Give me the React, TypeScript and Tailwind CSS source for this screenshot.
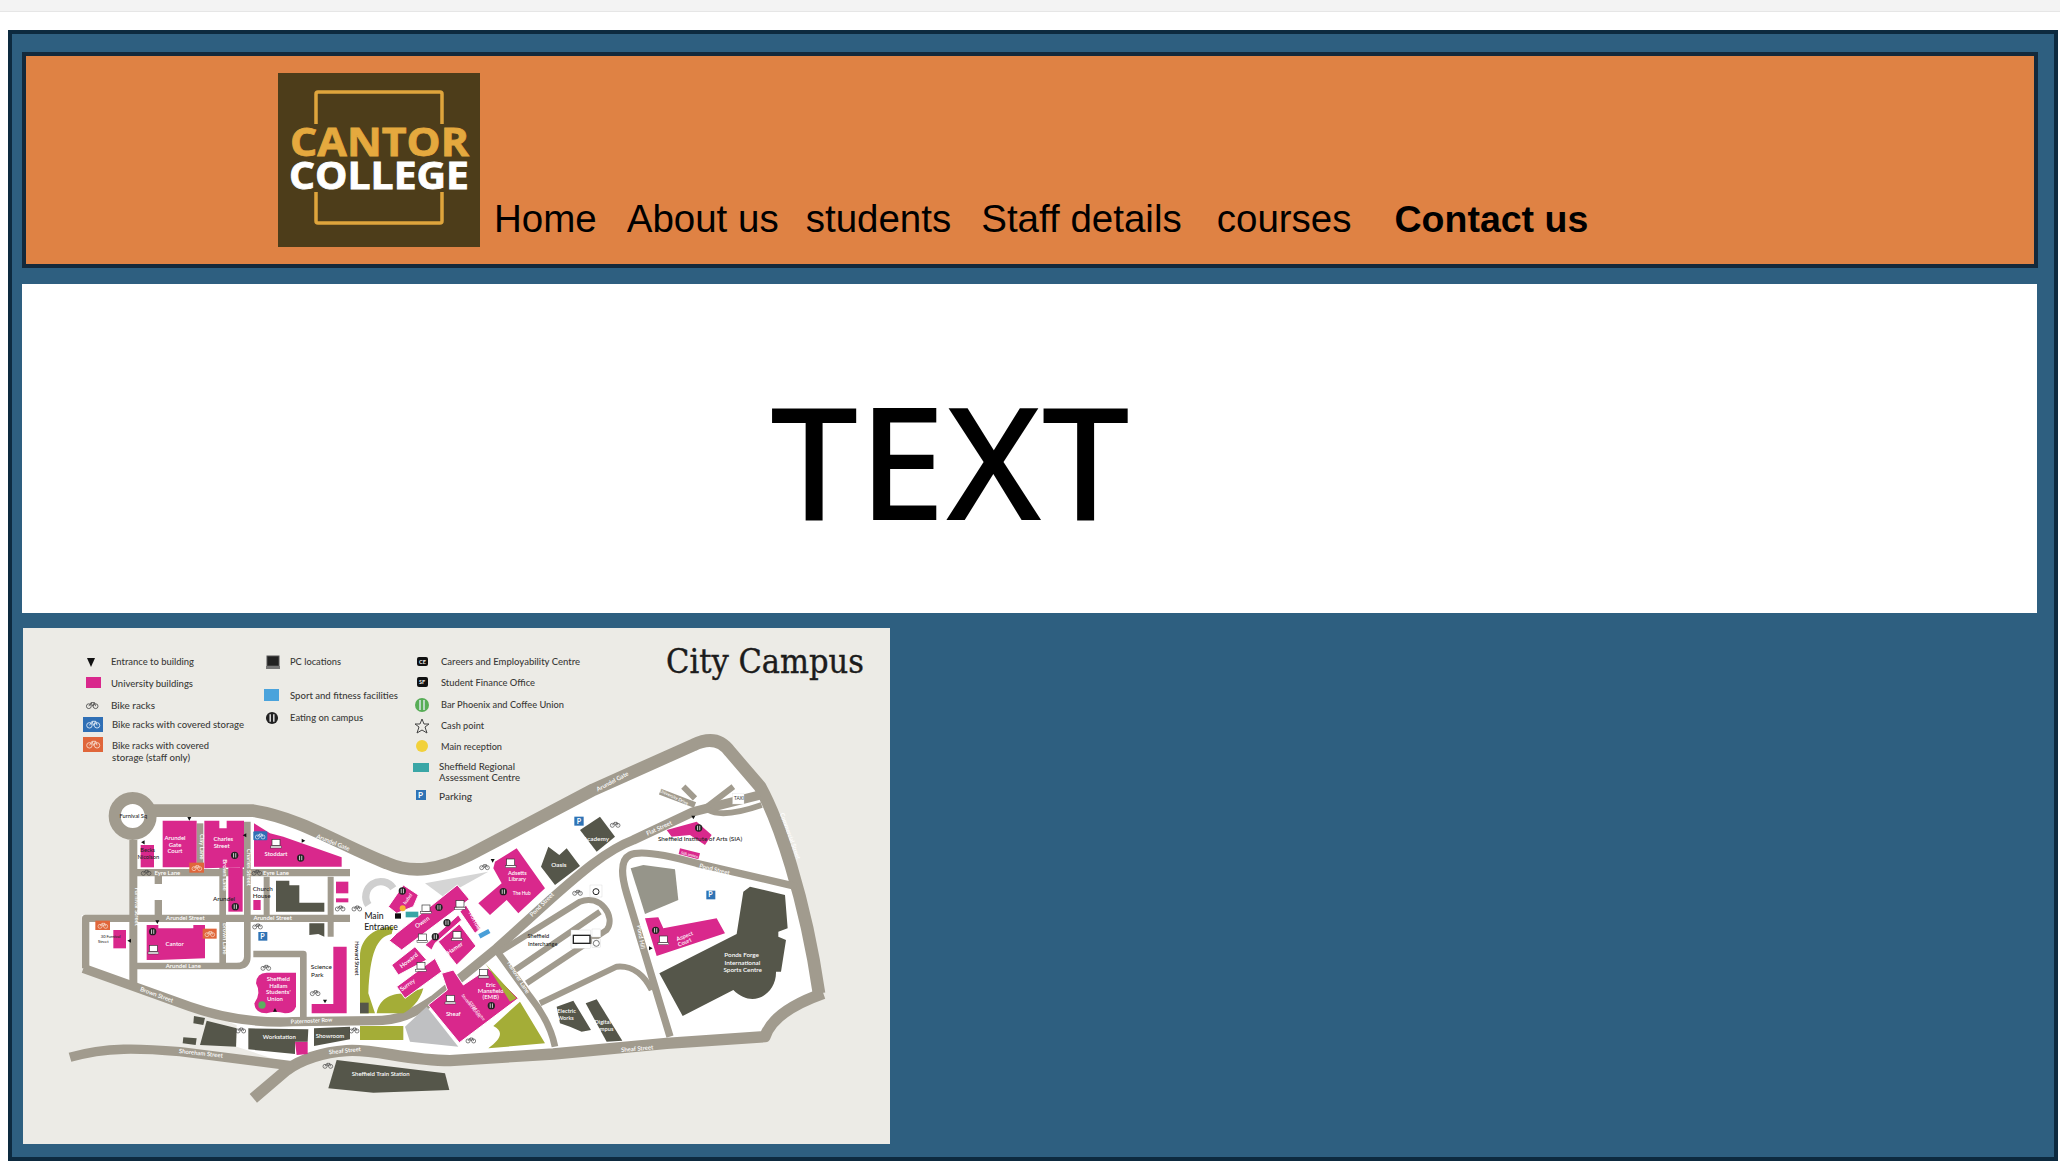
const nav = [
  { label: "Home", className: "ml-[14px]" },
  { label: "About us", className: "ml-[30px]" },
  { label: "students", className: "ml-[27px]" },
  { label: "Staff details", className: "ml-[30px]" },
  { label: "courses", className: "ml-[35px]" },
  { label: "Contact us", className: "ml-[43px] text-[37.5px] font-bold" },
];

const PINK = "#d9288c";
const ROAD = "#a19b8e";
const DARK = "#55564a";
const OLIVE = "#a4ad37";
const GREY = "#bfc0c2";

// building outlines, in coordinates of the left half of the map
const pinkLeft = [
  "368,122 470,122 470,262 368,262",
  "493,122 538,122 538,145 560,145 560,122 612,122 612,262 600,265 600,262 493,265",
  "565,262 608,262 608,395 565,395",
  "302,195 342,195 342,262 302,262",
  "642,130 690,160 730,170 905,232 905,260 642,260",
  "320,435 355,435 355,445 460,445 460,435 495,435 495,535 355,540 320,540",
  "220,450 258,450 258,505 220,505",
  "640,360 662,360 662,390 640,390",
  "888,305 925,305 925,340 888,340",
  "888,355 925,355 925,367 888,367",
  "880,500 920,500 920,700 815,700 815,672 880,672",
  "765,785 803,785 803,822 770,825",
];
const darkLeft = [
  "462,708 495,714 490,735 460,730",
  "430,772 470,775 467,795 428,790",
  "500,722 590,745 588,800 480,795",
  "625,745 805,748 803,785 765,785 765,822 625,808",
  "822,745 930,740 930,778 822,798",
  "708,302 748,302 748,316 778,316 778,368 853,368 853,395 708,395",
  "808,430 853,430 853,470 835,462 808,465",
  "960,668 986,668 986,700 960,700",
];
// central cluster
const pinkMiddle = [
  "85,170 130,105 175,135 160,170 110,190",
  "88,272 110,250 292,105 328,148 125,300",
  "300,185 318,165 362,235 345,250",
  "235,275 298,222 348,288 290,345",
  "195,285 295,195 305,210 225,280 215,300",
  "95,345 165,290 200,330 115,375",
  "110,410 225,325 245,365 135,445",
  "245,370 280,360 310,405 385,355 475,445 298,578 205,465 262,420",
];
// right half
const pinkRight = [
  "285,245 350,205 435,325 355,400 320,360 270,405 235,370 305,310 280,265",
  "735,415 775,412 790,445 950,415 975,460 770,528",
  "800,150 890,125 935,165 915,195 870,165 815,170",
  "840,205 900,220 895,238 836,222",
];
const darkRight = [
  "600,110 645,170 590,215 540,150",
  "445,200 478,225 500,205 540,258 465,315 423,260",
  "470,680 520,662 573,750 545,755 510,740 480,730",
  "557,670 590,658 667,782 620,785",
];

function Bike({ x, y, color = "#444" }: { x: number; y: number; color?: string }) {
  return (
    <g transform={`translate(${x} ${y})`} fill="none" stroke={color} strokeWidth="2">
      <circle cx="-8" cy="3" r="6" />
      <circle cx="9" cy="3" r="6" />
      <path d="M-8 3 L-2 -6 L6 -6 L9 3 M-2 -6 L1 3 L6 -6" />
    </g>
  );
}

function Eat({ x, y, r = 11 }: { x: number; y: number; r?: number }) {
  return (
    <g transform={`translate(${x} ${y})`}>
      <circle r={r} fill="#222" />
      <path d={`M${-r * 0.3} ${-r * 0.6} V${r * 0.6} M${r * 0.3} ${-r * 0.6} V${r * 0.6}`} stroke="#eee" strokeWidth="2.5" />
    </g>
  );
}

function Pc({ x, y }: { x: number; y: number }) {
  return (
    <g transform={`translate(${x} ${y})`}>
      <rect x="-12" y="-13" width="24" height="19" fill="#fff" stroke="#333" strokeWidth="2" />
      <rect x="-16" y="7" width="32" height="6" fill="#fff" stroke="#333" strokeWidth="1.5" />
    </g>
  );
}

function Arrow({ x, y, rotate = 0 }: { x: number; y: number; rotate?: number }) {
  return <path transform={`translate(${x} ${y}) rotate(${rotate})`} d="M-6 -5 H6 L0 6 Z" fill="#111" />;
}

function Label({
  x,
  y,
  text,
  size = 18,
  rotate = 0,
  color = "#fff",
  weight = 600,
}: {
  x: number;
  y: number;
  text: string;
  size?: number;
  rotate?: number;
  color?: string;
  weight?: number;
}) {
  return (
    <text
      transform={`translate(${x} ${y}) rotate(${rotate})`}
      textAnchor="middle"
      fontSize={size}
      fontWeight={weight}
      fill={color}
    >
      {text}
    </text>
  );
}

function Legend({ x, y, width, text }: { x: number; y: number; width: number; text: string }) {
  return (
    <text x={x} y={y} fontSize="9.5" fontWeight="500" fill="#3a3a38" textLength={width} lengthAdjust="spacingAndGlyphs">
      {text}
    </text>
  );
}

function CampusMap() {
  return (
    <svg viewBox="23 628 867 516" className="block h-[516px] w-[867px]" style={{ fontFamily: '"Lato", "Open Sans", sans-serif' }}>
      <rect x="23" y="628" width="867" height="516" fill="#ecebe6" />

      {/* legend */}
      <path d="M87 658 H95 L91 667 Z" fill="#111" />
      <rect x="86" y="677" width="15" height="11" fill={PINK} />
      <g transform="translate(92 705) scale(.4)">
        <Bike x={0} y={0} />
      </g>
      <rect x="83" y="717" width="20" height="15" fill="#2f6fb5" />
      <g transform="translate(93 724) scale(.45)">
        <Bike x={0} y={0} color="#dfe9f5" />
      </g>
      <rect x="83" y="737" width="20" height="15" fill="#e0663a" />
      <g transform="translate(93 744) scale(.45)">
        <Bike x={0} y={0} color="#f6d8c8" />
      </g>
      <Legend x={111} y={665} width={83} text="Entrance to building" />
      <Legend x={111} y={687} width={82} text="University buildings" />
      <Legend x={111} y={709} width={44} text="Bike racks" />
      <Legend x={112} y={728} width={132} text="Bike racks with covered storage" />
      <Legend x={112} y={749} width={97} text="Bike racks with covered" />
      <Legend x={112} y={761} width={78} text="storage (staff only)" />

      <rect x="267" y="656" width="12" height="10" fill="#222" stroke="#555" />
      <rect x="266" y="666" width="14" height="3" fill="#777" />
      <rect x="264" y="689" width="15" height="12" fill="#4aa3dc" />
      <g transform="translate(272 718) scale(.55)">
        <Eat x={0} y={0} />
      </g>
      <Legend x={290} y={665} width={51} text="PC locations" />
      <Legend x={290} y={699} width={108} text="Sport and fitness facilities" />
      <Legend x={290} y={721} width={73} text="Eating on campus" />

      <rect x="417" y="657" width="11" height="9" rx="2" fill="#111" />
      <text x="419" y="664" fontSize="5.5" fontWeight="700" fill="#eee">CE</text>
      <rect x="417" y="677" width="11" height="10" rx="2" fill="#111" />
      <text x="419" y="684" fontSize="5.5" fontWeight="700" fill="#eee">SF</text>
      <circle cx="422" cy="705" r="7" fill="#58ad57" />
      <path d="M420 700 V710 M424 700 V710" stroke="#eef" strokeWidth="1.3" />
      <path d="M422 719 L424 724 L429 724 L425 727 L427 733 L422 730 L417 733 L419 727 L415 724 L420 724 Z" fill="none" stroke="#444" />
      <circle cx="422" cy="746" r="6" fill="#f2d13b" />
      <rect x="413" y="763" width="16" height="9" fill="#3aa6a6" />
      <rect x="416" y="790" width="10" height="10" fill="#2f73b5" />
      <text x="418" y="798" fontSize="8" fontWeight="700" fill="#fff">P</text>
      <Legend x={441} y={665} width={139} text="Careers and Employability Centre" />
      <Legend x={441} y={686} width={94} text="Student Finance Office" />
      <Legend x={441} y={708} width={123} text="Bar Phoenix and Coffee Union" />
      <Legend x={441} y={729} width={43} text="Cash point" />
      <Legend x={441} y={750} width={61} text="Main reception" />
      <Legend x={439} y={770} width={76} text="Sheffield Regional" />
      <Legend x={439} y={781} width={81} text="Assessment Centre" />
      <Legend x={439} y={800} width={33} text="Parking" />

      <text
        x="666"
        y="673"
        fontSize="34"
        fill="#1c1c1c"
        stroke="#1c1c1c"
        strokeWidth=".4"
        textLength="198"
        lengthAdjust="spacingAndGlyphs"
        style={{ fontFamily: '"DejaVu Serif", serif' }}
      >
        City Campus
      </text>

      {/* the map itself, drawn at 3 units to a pixel */}
      <g transform="translate(40 780) scale(.33333)">
        <path
          d="M280,108 L640,90 C780,110 900,190 1040,245 C1120,280 1200,265 1290,220 L1660,25 L1960,-105 Q2030,-140 2070,-85 L2160,20 C2215,120 2295,350 2340,640 C2265,670 2195,710 2175,770 L1880,790 L1540,820 L1230,838 L950,800 L830,810 L740,850 L590,800 L590,735 L130,565 L125,405 L280,405 Z"
          fill="#fff"
        />
        <g fill="none" stroke={ROAD} strokeLinejoin="round" strokeLinecap="butt">
          <path strokeWidth="38" d="M330,92 L640,92 C780,114 900,194 1040,249 C1120,284 1200,269 1290,224 L1660,29 L1960,-105 Q2030,-140 2070,-85 L2160,20 C2215,120 2295,350 2337,640" />
          <path strokeWidth="34" d="M2350,640 C2265,670 2195,710 2175,770 L1880,790 L1540,822 L1230,842 C1100,842 1000,805 920,812 C840,818 780,842 740,870 L640,955" />
          <path strokeWidth="28" d="M90,832 C200,800 300,805 420,815 L760,858" />
          <path strokeWidth="28" d="M130,565 L450,680 C550,715 650,730 760,725 L1000,722 C1080,722 1120,700 1180,660 L1370,505 L1530,360 C1620,280 1700,210 1780,180 L1960,95 L2160,45" />
          <path strokeWidth="22" d="M137,565 L137,415 L930,415" />
          <path strokeWidth="24" d="M280,180 L280,625" />
          <path strokeWidth="22" d="M290,278 L930,278" />
          <path strokeWidth="20" d="M548,240 L548,555" />
          <path strokeWidth="20" d="M622,125 L622,530 Q622,558 590,558 L290,558" />
          <path strokeWidth="20" d="M480,130 L480,270" />
          <path strokeWidth="22" d="M355,285 L355,312 M355,360 L355,405" />
          <path strokeWidth="18" d="M680,290 L680,405 M872,290 L872,470" />
          <path strokeWidth="20" d="M640,522 L790,522 L790,720" />
          {/* right hand side streets */}
          <g transform="translate(1080 0)">
            <path strokeWidth="22" d="M1190,320 L890,250 C800,225 720,210 690,225 C660,240 665,290 680,340 L810,770" />
            <path strokeWidth="20" d="M285,505 L390,650 C430,700 455,750 465,800" />
            <path strokeWidth="18" d="M300,515 L540,365 C600,340 650,410 620,450 L380,610 M345,570 L600,395" />
            <path strokeWidth="18" d="M420,670 L650,560 C700,555 735,590 755,630" />
            <path strokeWidth="18" d="M915,85 L1000,20 M925,90 Q970,115 1085,75 M780,35 L885,75 M850,20 L885,55" />
          </g>
        </g>
        <circle cx="278" cy="108" r="54" fill="#fff" stroke={ROAD} strokeWidth="36" />

        <path d="M960,700 L960,530 C960,470 1010,440 1060,440 L1055,462 C1010,470 990,520 985,640 L1005,700 Z M1010,700 C1020,650 1060,640 1100,640 L1150,625 C1140,665 1110,690 1090,700 Z" fill={OLIVE} />
        <rect x="960" y="738" width="130" height="42" fill={OLIVE} />
        <path d="M1095,740 L1160,680 L1255,800 L1110,785 Z" fill={GREY} />
        <path d="M1155,310 L1345,275 L1210,350 Z" fill="#d5d5d5" />
        <path d="M985,375 A40,40 0 1 1 1060,325" fill="none" stroke="#cfcfcf" strokeWidth="22" />

        {pinkLeft.map((points) => (
          <polygon key={points} points={points} fill={PINK} />
        ))}
        <path d="M648,610 Q650,578 680,578 L768,578 L768,680 Q760,700 735,700 Q705,690 680,700 Q645,700 643,670 Q665,640 648,610 Z" fill={PINK} />
        {darkLeft.map((points) => (
          <polygon key={points} points={points} fill={DARK} />
        ))}
        <path d="M890,840 L1215,880 L1228,930 L1000,938 L865,925 Z" fill={DARK} />

        <g transform="translate(960 210)">
          {pinkMiddle.map((points) => (
            <polygon key={points} points={points} fill={PINK} stroke="#fff" strokeWidth="3" />
          ))}
          <rect x="356" y="244" width="34" height="14" transform="rotate(-28 373 251)" fill="#4a9fd8" />
          <circle cx="128" cy="175" r="9" fill="#f5b335" />
          <rect x="137" y="185" width="38" height="17" fill="#39a5a5" />
          <Pc x={198} y={178} />
          <Pc x={300} y={165} />
          <Pc x={187} y={265} />
          <Pc x={291} y={258} />
          <Pc x={183} y={351} />
          <Pc x={371} y={371} />
          <Pc x={271} y={449} />
          <Eat x={237} y={172} />
          <Eat x={261} y={218} />
          <Eat x={226} y={260} />
          <Eat x={394} y={467} />
          <Eat x={127} y={123} />
          <rect x="105" y="190" width="18" height="16" fill="#111" />
          <Label x={190} y={222} rotate={-35} text="Owen" />
          <Label x={340} y={215} rotate={62} text="Norfolk" />
          <Label x={288} y={300} rotate={-35} text="Hamer" />
          <Label x={225} y={242} rotate={-40} text="Atkin" />
          <Label x={150} y={336} rotate={-38} text="Howard" />
          <Label x={146} y={410} rotate={-35} text="Surrey" />
          <Label x={280} y={497} text="Sheaf" />
          <Label x={392} y={410} text="Eric" />
          <Label x={392} y={428} text="Mansfield" />
          <Label x={392} y={446} text="(EMB)" />
          <Label x={330} y={470} size={12} rotate={52} text="Stoddart Atrium" />
          <Label x={348} y={485} size={12} rotate={52} text="STEM Centre" />
          <Label x={147} y={150} size={14} rotate={-55} text="Isabel" />
        </g>

        <Arrow x={448} y={116} />
        <Arrow x={311} y={188} rotate={-30} />
        <Arrow x={614} y={166} rotate={90} />
        <Arrow x={790} y={182} rotate={-90} />
        <Arrow x={352} y={426} />
        <Arrow x={268} y={482} rotate={90} />
        <Arrow x={855} y={664} />
        <Arrow x={705} y={690} rotate={180} />
        <Bike x={318} y={277} />
        <Bike x={650} y={277} />
        <Bike x={900} y={384} />
        <Bike x={950} y={384} />
        <Bike x={652} y={438} />
        <Bike x={677} y={562} />
        <Bike x={825} y={638} />
        <Bike x={602} y={750} />
        <Bike x={942} y={750} />
        <Bike x={863} y={856} />
        <rect x="640" y="154" width="42" height="27" rx="3" fill="#2f6fb5" />
        <rect x="448" y="248" width="44" height="30" fill="#e0663a" />
        <rect x="166" y="422" width="44" height="28" fill="#e0663a" />
        <rect x="488" y="446" width="42" height="30" fill="#e0663a" />
        <Bike x={660} y={168} color="#e8f0fa" />
        <Bike x={470} y={263} color="#f9e2d5" />
        <Bike x={188} y={436} color="#f9e2d5" />
        <Bike x={509} y={461} color="#f9e2d5" />
        <rect x="655" y="456" width="27" height="26" fill="#2f73b5" />
        <text x="661" y="477" fontSize="21" fontWeight="700" fill="#fff">P</text>
        <Eat x={338} y={455} />
        <Eat x={586} y={380} />
        <Eat x={584} y={226} />
        <Eat x={782} y={234} />
        <Pc x={340} y={509} />
        <Pc x={708} y={191} />
        <circle cx="666" cy="675" r="11" fill="#5bb060" />

        <Label x={280} y={114} size={17} color="#222" weight={500} text="Furnival Sq" />
        <Label x={405} y={180} text="Arundel" />
        <Label x={405} y={200} text="Gate" />
        <Label x={405} y={220} text="Court" />
        <Label x={550} y={182} text="Charles" />
        <Label x={545} y={204} text="Street" />
        <Label x={708} y={228} text="Stoddart" />
        <Label x={404} y={497} text="Cantor" />
        <Label x={715} y={604} text="Sheffield" />
        <Label x={715} y={624} text="Hallam" />
        <Label x={715} y={642} text="Students'" />
        <Label x={705} y={662} text="Union" />
        <Label x={382} y={284} text="Eyre Lane" />
        <Label x={708} y={284} text="Eyre Lane" />
        <Label x={436} y={421} text="Arundel Street" />
        <Label x={698} y={419} text="Arundel Street" />
        <Label x={430} y={564} text="Arundel Lane" />
        <Label x={348} y={650} rotate={20} text="Brown Street" />
        <Label x={815} y={728} size={17} rotate={-3} text="Paternoster Row" />
        <Label x={482} y={826} rotate={6} text="Shoreham Street" />
        <Label x={915} y={818} rotate={-6} text="Sheaf Street" />
        <Label x={877} y={193} rotate={22} text="Arundel Gate" />
        <Label x={284} y={380} rotate={90} text="Furnival Street" />
        <Label x={622} y={262} rotate={90} text="Charles Street" />
        <Label x={549} y={285} rotate={90} text="Brown Lane" />
        <Label x={549} y={476} rotate={90} text="Brown Lane" />
        <Label x={481} y={200} rotate={90} text="Clay Lane" />
        <Label x={718} y={777} text="Workstation" />
        <Label x={870} y={774} text="Showroom" />
        <Label x={1022} y={889} text="Sheffield Train Station" />
        <Label x={552} y={362} size={19} color="#222" weight={500} text="Arundel" />
        <Label x={668} y={334} size={19} color="#222" weight={500} text="Church" />
        <Label x={665} y={355} size={19} color="#222" weight={500} text="House" />
        <Label x={844} y={568} size={19} color="#222" weight={500} text="Science" />
        <Label x={832} y={590} size={19} color="#222" weight={500} text="Park" />
        <Label x={323} y={216} size={17} color="#222" weight={500} text="Becks" />
        <Label x={325} y={238} size={17} color="#222" weight={500} text="Nicolson" />
        <Label x={212} y={475} size={12} color="#222" weight={500} text="30 Furnival" />
        <Label x={190} y={489} size={12} color="#222" weight={500} text="Street" />
        <Label x={1002} y={418} size={26} color="#222" weight={500} text="Main" />
        <Label x={1023} y={449} size={26} color="#222" weight={500} text="Entrance" />
        <Label x={945} y={535} size={16} rotate={90} color="#222" weight={600} text="Howard Street" />

        <g transform="translate(1080 0)">
          {pinkRight.map((points) => (
            <polygon key={points} points={points} fill={PINK} />
          ))}
          <path d="M265,805 C300,780 315,755 280,738 L360,665 L435,790 Z" fill={OLIVE} />
          <path d="M255,550 L350,655 L330,665 L270,570 Z" fill={OLIVE} />
          {darkRight.map((points) => (
            <polygon key={points} points={points} fill={DARK} />
          ))}
          <path d="M692,265 L730,255 L825,268 L835,360 L735,402 Z" fill="#96958a" />
          <path d="M1050,320 L1155,345 L1163,445 L1135,455 L1135,470 L1158,480 L1143,575 L1128,575 C1130,640 1060,690 1000,630 L848,708 L778,580 L1010,462 L1030,335 Z" fill={DARK} />
          <rect x="998" y="40" width="34" height="32" fill="#fff" stroke="#ddd" />
          <text x="1002" y="61" fontSize="14" fill="#333">TAXI</text>
          <rect x="570" y="315" width="36" height="36" fill="#fff" stroke="#ccc" />
          <circle cx="588" cy="335" r="9" fill="none" stroke="#222" strokeWidth="3" />
          <rect x="513" y="450" width="58" height="55" fill="#fff" stroke="#ccc" />
          <rect x="520" y="466" width="50" height="24" fill="#fff" stroke="#222" strokeWidth="4" />
          <rect x="576" y="447" width="26" height="24" fill="#fff" stroke="#ccc" />
          <rect x="576" y="477" width="26" height="26" fill="#fff" stroke="#ccc" />
          <circle cx="589" cy="490" r="9" fill="none" stroke="#333" strokeWidth="2" />
          <rect x="523" y="110" width="28" height="27" fill="#2f73b5" />
          <text x="530" y="131" fontSize="21" fontWeight="700" fill="#fff">P</text>
          <rect x="919" y="332" width="27" height="26" fill="#2f73b5" />
          <text x="925" y="352" fontSize="21" fontWeight="700" fill="#fff">P</text>
          <Bike x={645} y={133} />
          <Bike x={532} y={337} />
          <Bike x={253} y={260} />
          <Bike x={212} y={780} />
          <Pc x={332} y={250} />
          <Pc x={790} y={481} />
          <Eat x={310} y={335} />
          <Eat x={767} y={451} />
          <Eat x={896} y={144} />
          <Arrow x={278} y={242} />
          <Arrow x={880} y={112} />
          <Arrow x={752} y={505} rotate={-90} />
          <Label x={352} y={284} size={17} text="Adsetts" />
          <Label x={352} y={302} size={17} text="Library" />
          <Label x={365} y={344} size={14} text="The Hub" />
          <Label x={856} y={474} size={17} rotate={-22} text="Aspect" />
          <Label x={856} y={492} size={17} rotate={-22} text="Court" />
          <Label x={868} y={228} size={12} rotate={14} text="SIA annex" />
          <Label x={430} y={378} rotate={-45} text="Pond Street" />
          <Label x={942} y={274} rotate={14} text="Pond Street" />
          <Label x={717} y={472} rotate={80} text="Pond Hill" />
          <Label x={350} y={595} rotate={58} text="Hanover Lane" />
          <Label x={712} y={812} rotate={-5} text="Sheaf Street" />
          <Label x={780} y={150} rotate={-25} text="Flat Street" />
          <Label x={1165} y={170} rotate={70} text="Commercial Street" />
          <Label x={640} y={10} rotate={-28} text="Arundel Gate" />
          <Label x={820} y={55} size={13} rotate={25} text="University Drive" />
          <Label x={900} y={183} size={19} color="#222" weight={500} text="Sheffield Institute of Arts (SIA)" />
          <Label x={415} y={475} size={17} color="#222" weight={500} text="Sheffield" />
          <Label x={428} y={497} size={17} color="#222" weight={500} text="Interchange" />
          <Label x={477} y={260} size={19} text="Oasis" />
          <Label x={588} y={183} size={19} text="Academy" />
          <Label x={1025} y={532} size={19} text="Ponds Forge" />
          <Label x={1027} y={554} size={19} text="International" />
          <Label x={1028} y={576} size={19} text="Sports Centre" />
          <Label x={500} y={700} size={17} text="Electric" />
          <Label x={497} y={721} size={17} text="Works" />
          <Label x={608} y={732} size={17} text="Digital" />
          <Label x={610} y={752} size={17} text="Campus" />
        </g>
      </g>
    </svg>
  );
}

function Logo() {
  return (
    <svg viewBox="278 73 202 174" className="block h-[174px] w-[202px] shrink-0" style={{ fontFamily: '"Open Sans", sans-serif' }}>
      <rect x="278" y="73" width="202" height="174" fill="#4d3d1a" />
      <path d="M316 124 V94 Q316 92 318 92 H440 Q442 92 442 94 V124 M316 192 V221 Q316 223 318 223 H440 Q442 223 442 221 V192" fill="none" stroke="#dfa53c" strokeWidth="3.5" />
      <text x="290" y="156" fontSize="40" fontWeight="700" fill="#e5a93e" stroke="#e5a93e" strokeWidth=".8" textLength="179" lengthAdjust="spacingAndGlyphs">CANTOR</text>
      <text x="289" y="189" fontSize="37" fontWeight="700" fill="#fff" stroke="#fff" strokeWidth=".8" textLength="180" lengthAdjust="spacingAndGlyphs">COLLEGE</text>
    </svg>
  );
}

export default function App() {
  return (
    <div className="min-h-[1170px] bg-white">
      <div className="h-[12px] border-b border-[#e6e6e6] bg-[#f3f3f3]" />
      <main className="mt-[18px] ml-[8px] w-[2050px] border-4 border-[#0d2a3f] bg-[#2e5f80] pt-[18px] pr-[16px] pb-[13px] pl-[10px]">
        <header className="flex h-[216px] border-4 border-[#14293b] bg-[#df8244] pl-[252px]">
          <div className="mt-[17px]">
            <Logo />
          </div>
          <nav className="flex items-end pb-[26px] font-['Liberation_Sans',sans-serif] text-[38.5px] leading-none text-black">
            {nav.map((item) => (
              <a key={item.label} href="#" className={item.className}>
                {item.label}
              </a>
            ))}
          </nav>
        </header>
        <section className="mt-[16px] flex h-[329px] w-[2015px] items-center bg-white pl-[748px]">
          <h1 className="pt-[22px] font-['Noto_Sans',sans-serif] text-[157px] leading-none font-medium text-black">TEXT</h1>
        </section>
        <div className="mt-[15px] ml-[1px]">
          <CampusMap />
        </div>
      </main>
    </div>
  );
}
